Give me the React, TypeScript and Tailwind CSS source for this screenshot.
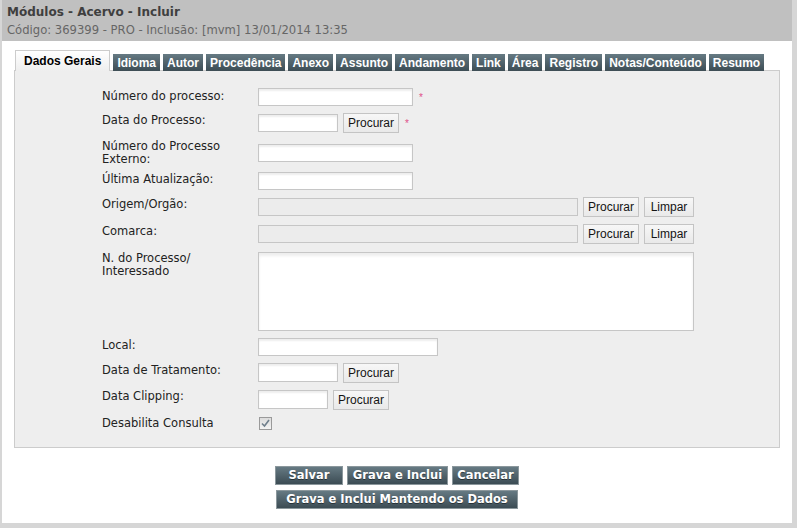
import type { ReactNode } from "react";

const tabs = [
  "Idioma",
  "Autor",
  "Procedência",
  "Anexo",
  "Assunto",
  "Andamento",
  "Link",
  "Área",
  "Registro",
  "Notas/Conteúdo",
  "Resumo",
];

const Field = ({ className }: { className: string }) => (
  <div
    className={`h-[18px] border border-[#c6c6c6] bg-white shadow-[inset_0_2px_2px_rgba(0,0,0,0.07)] ${className}`}
  />
);

const Disabled = ({ className }: { className: string }) => (
  <div className={`h-[18px] border border-[#c6c6c6] bg-[#ececec] ${className}`} />
);

const Btn = ({ children, className = "" }: { children: ReactNode; className?: string }) => (
  <div
    className={`h-[20px] flex items-center justify-center border border-[#c4c4c4] bg-linear-to-b from-[#f7f7f7] to-[#e9e9e9] font-['Liberation_Sans',Arial,sans-serif] text-[12px] text-[#141414] ${className}`}
  >
    {children}
  </div>
);

const Star = () => (
  <span className="ml-[6px] mt-[5px] text-[10px] leading-[10px] text-[#e0508a] font-['Liberation_Sans',sans-serif]">
    *
  </span>
);

const Row = ({
  label,
  className,
  labelClass = "",
  children,
}: {
  label: ReactNode;
  className: string;
  labelClass?: string;
  children: ReactNode;
}) => (
  <div className={`flex items-start ${className}`}>
    <div className={`w-[156px] shrink-0 text-[11.5px] leading-[13px] text-[#222] ${labelClass}`}>
      {label}
    </div>
    <div className="flex items-start">{children}</div>
  </div>
);

const DarkBtn = ({ children, className }: { children: ReactNode; className: string }) => (
  <div
    className={`h-[19px] flex items-center justify-center border border-[#8b979c] bg-linear-to-b from-[#667a83] to-[#3c4c54] text-white font-bold text-[11.5px] [text-shadow:0_1px_0_rgba(0,0,0,0.45)] ${className}`}
  >
    {children}
  </div>
);

export default function App() {
  return (
    <div className="w-[797px] h-[528px] bg-[#d6d6d6] pl-[2px] font-['DejaVu_Sans',Verdana,sans-serif] overflow-hidden">
      <div className="w-[790px] h-[523px] bg-white flex flex-col">
        {/* cabeçalho */}
        <div className="h-[41px] bg-[#c0c0c0] pl-[5px] pt-[5px] shrink-0">
          <div className="text-[12px] leading-[15px] font-bold text-[#3f3f3f]">
            Módulos - Acervo - Incluir
          </div>
          <div className="mt-[3px] text-[11.6px] leading-[15px] text-[#666]">
            Código: 369399 - PRO - Inclusão: [mvm] 13/01/2014 13:35
          </div>
        </div>

        <div className="px-[12px] pt-[9px]">
          {/* abas */}
          <div className="flex items-end gap-[3px] pl-[1px] -mb-px relative z-10 font-['Liberation_Sans',Arial,sans-serif] text-[12px] font-bold">
            <div className="h-[21px] px-[8px] flex items-center border border-b-0 border-[#cccccc] bg-linear-to-b from-white to-[#eeeeee] text-black">
              Dados Gerais
            </div>
            {tabs.map((t) => (
              <div
                key={t}
                className="h-[17px] px-[4px] flex items-center bg-linear-to-b from-[#667a83] to-[#3d4d55] text-white"
              >
                {t}
              </div>
            ))}
          </div>

          {/* painel */}
          <div className="h-[378px] border border-[#cccccc] bg-[#eeeeee] pt-[17px] pl-[87px]">
            <Row label="Número do processo:" className="h-[26px]" labelClass="mt-[2px]">
              <Field className="w-[155px]" />
              <Star />
            </Row>
            <Row label="Data do Processo:" className="h-[30px]">
              <Field className="w-[80px]" />
              <Btn className="ml-[5px] -mt-[1px] w-[56px]">Procurar</Btn>
              <Star />
            </Row>
            <Row
              label={
                <>
                  Número do Processo
                  <br />
                  Externo:
                </>
              }
              className="h-[28px]"
              labelClass="-mt-[4px]"
            >
              <Field className="w-[155px]" />
            </Row>
            <Row label="Última Atualização:" className="h-[26px]" labelClass="mt-[1px]">
              <Field className="w-[155px]" />
            </Row>
            <Row label="Origem/Orgão:" className="h-[27px]">
              <Disabled className="w-[320px]" />
              <Btn className="ml-[5px] -mt-[1px] w-[56px]">Procurar</Btn>
              <Btn className="ml-[5px] -mt-[1px] w-[50px]">Limpar</Btn>
            </Row>
            <Row label="Comarca:" className="h-[27px]">
              <Disabled className="w-[320px]" />
              <Btn className="ml-[5px] -mt-[1px] w-[56px]">Procurar</Btn>
              <Btn className="ml-[5px] -mt-[1px] w-[50px]">Limpar</Btn>
            </Row>
            <Row
              label={
                <>
                  N. do Processo/
                  <br />
                  Interessado
                </>
              }
              className="h-[86px]"
            >
              <div className="w-[436px] h-[79px] border border-[#c6c6c6] bg-white shadow-[inset_0_3px_3px_rgba(0,0,0,0.07)]" />
            </Row>
            <Row label="Local:" className="h-[25px]" labelClass="mt-[1px]">
              <Field className="w-[180px]" />
            </Row>
            <Row label="Data de Tratamento:" className="h-[27px]" labelClass="mt-[1px]">
              <Field className="w-[80px] h-[19px]" />
              <Btn className="ml-[5px] w-[56px]">Procurar</Btn>
            </Row>
            <Row label="Data Clipping:" className="h-[27px]">
              <Field className="w-[70px] h-[19px]" />
              <Btn className="ml-[5px] w-[56px]">Procurar</Btn>
            </Row>
            <Row label="Desabilita Consulta" className="h-[13px]">
              <div className="ml-[1px] w-[13px] h-[13px] border border-[#9a9a9a] bg-linear-to-b from-[#dcdcdc] to-[#f4f4f4] flex items-center justify-center">
                <svg width="9" height="9" viewBox="0 0 9 9">
                  <path d="M1 4.5 L3.5 7 L8 1" fill="none" stroke="#6f7f8c" strokeWidth="1.6" />
                </svg>
              </div>
            </Row>
          </div>
        </div>

        {/* ações */}
        <div className="mt-[18px] flex flex-col items-center gap-[5px]">
          <div className="flex gap-[4px]">
            <DarkBtn className="w-[68px]">Salvar</DarkBtn>
            <DarkBtn className="w-[101px]">Grava e Inclui</DarkBtn>
            <DarkBtn className="w-[67px]">Cancelar</DarkBtn>
          </div>
          <DarkBtn className="w-[242px]">Grava e Inclui Mantendo os Dados</DarkBtn>
        </div>
      </div>
    </div>
  );
}
